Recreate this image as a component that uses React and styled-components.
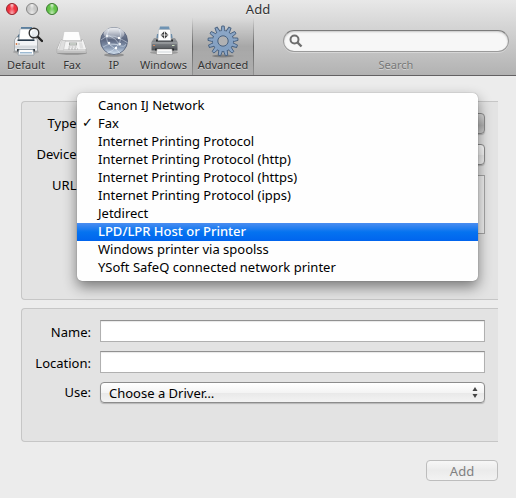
import { useState } from "react";
import styled, { createGlobalStyle, css } from "styled-components";

const protocols = [
  "Canon IJ Network",
  "Fax",
  "Internet Printing Protocol",
  "Internet Printing Protocol (http)",
  "Internet Printing Protocol (https)",
  "Internet Printing Protocol (ipps)",
  "Jetdirect",
  "LPD/LPR Host or Printer",
  "Windows printer via spoolss",
  "YSoft SafeQ connected network printer",
];

const DefaultIcon = () => (
  <svg width="34" height="34" viewBox="0 0 34 34" aria-hidden="true">
    <ellipse cx="17" cy="28" rx="13" ry="2" fill="#000" opacity="0.15" />
    <path d="M12 3h11v4H12z" fill="#5b7f9f" />
    <path d="M8 13l2-3h14l2 3v4H8z" fill="#4a6983" />
    <path d="M11 5h12l1 11H10z" fill="#fff" stroke="#9aa7b3" strokeWidth="0.6" />
    <path d="M5.500 16l2-3h2v3h15v-3h2l2 3v11h-23z" fill="#f1f3f5" stroke="#8d9297" strokeWidth="0.7" />
    <path d="M8.500 15.500h17v1.500h-17z" fill="#27394a" />
    <path d="M6 21.500h22v3H6z" fill="#d5d9dd" />
    <path d="M8 25h18v2.500H8z" fill="#3a4046" />
    <path d="M10 25.500h14l1 5.500H9z" fill="#fdfdfd" stroke="#7b8a97" strokeWidth="0.6" />
    <path d="M11 28h12v1.500H11z" fill="#9dbad2" />
    <circle cx="7.500" cy="20" r="0.9" fill="#d4773f" />
    <circle cx="10" cy="20" r="0.7" fill="#777" />
    <path d="M29 13l4 4" stroke="#222" strokeWidth="2.400" strokeLinecap="round" />
    <circle cx="25" cy="9" r="4.800" fill="#eef3f7" fillOpacity="0.85" stroke="#333" strokeWidth="1.400" />
    <path d="M22 9a3 3 0 0 1 3-3" stroke="#fff" strokeWidth="1.200" fill="none" />
  </svg>
);

const FaxIcon = () => (
  <svg width="34" height="34" viewBox="0 0 34 34" aria-hidden="true">
    <ellipse cx="17" cy="29" rx="15" ry="1.800" fill="#000" opacity="0.25" />
    <path d="M6 16h22l3 9v4H2v-4z" fill="#d4d4d4" stroke="#a2a2a2" strokeWidth="0.6" />
    <path d="M6 16h22l3 9H2.500z" fill="#f3f3f3" />
    <path d="M8 15h19v2.500H8z" fill="#b5b5b5" />
    <path d="M9 7.500h15l2 9H7.500z" fill="#fdfdfd" stroke="#c4c4c4" strokeWidth="0.6" />
    <path d="M6.500 16.500h4l-2 10h-5z" fill="#dedede" stroke="#bbb" strokeWidth="0.5" />
    <path d="M14 18.500h8v3h-8z" fill="#a4a7a4" />
    <path d="M15 19.300h6v1.300h-6z" fill="#d5dcd5" />
    <path d="M13.500 23h9M13 25h10" stroke="#b0b0b0" strokeDasharray="2 1" />
    <path d="M24 18.500h3l1.500 6H25z" fill="#e0e0e0" />
    <path d="M2 28h29" stroke="#bdbdbd" strokeWidth="1.500" />
  </svg>
);

const GlobeIcon = () => (
  <svg width="34" height="34" viewBox="0 0 34 34" aria-hidden="true">
    <defs>
      <linearGradient id="globe" x1="0" y1="0" x2="0" y2="1">
        <stop offset="0" stopColor="#8e98ab" />
        <stop offset="0.45" stopColor="#5c6780" />
        <stop offset="0.75" stopColor="#8a9bb4" />
        <stop offset="1" stopColor="#d6e4f2" />
      </linearGradient>
      <linearGradient id="shine" x1="0" y1="0" x2="0" y2="1">
        <stop offset="0" stopColor="#fff" stopOpacity="0.85" />
        <stop offset="1" stopColor="#fff" stopOpacity="0.1" />
      </linearGradient>
    </defs>
    <ellipse cx="17" cy="31" rx="10" ry="1.800" fill="#000" opacity="0.25" />
    <circle cx="17" cy="17" r="13.500" fill="url(#globe)" stroke="#515c74" strokeWidth="0.8" />
    <ellipse cx="17" cy="9.500" rx="10.500" ry="6" fill="url(#shine)" />
    <g fill="none" stroke="#e8f1fb" strokeWidth="0.6" opacity="0.8">
      <path d="M4 16q8-7 18-2t8 5" />
      <path d="M12 5q-5 12 1 16t10 8" />
      <path d="M22 5q4 9-1 16t-11 8" />
      <path d="M6 23q8-5 15-2t8-1" />
      <path d="M9 10l9 5 5 6M13 21l10-1" />
    </g>
    <g fill="#fff">
      <circle cx="10" cy="12" r="1" />
      <circle cx="22" cy="14" r="1.200" />
      <circle cx="12" cy="19" r="1.300" />
      <circle cx="23" cy="20" r="1.100" />
      <circle cx="19" cy="24" r="1.200" />
    </g>
  </svg>
);

const WindowsIcon = () => (
  <svg width="34" height="34" viewBox="0 0 34 34" aria-hidden="true">
    <defs>
      <linearGradient id="body" x1="0" y1="0" x2="0" y2="1">
        <stop offset="0" stopColor="#9b9ea1" />
        <stop offset="0.5" stopColor="#75797d" />
        <stop offset="1" stopColor="#4c5054" />
      </linearGradient>
    </defs>
    <ellipse cx="17" cy="28.500" rx="14" ry="1.800" fill="#000" opacity="0.2" />
    <path d="M13 2.500h9l1 4H12z" fill="#6f93b3" />
    <path d="M10 10h15l1 7H9z" fill="#6488a8" />
    <path d="M7 14h21l2.500 4v8.500h-26V18z" fill="url(#body)" />
    <path d="M9 15.500h17v2H9z" fill="#26292c" />
    <path d="M11.500 5.500h12l.5 11H11z" fill="#fff" stroke="#a4acb3" strokeWidth="0.5" />
    <path d="M17.500 7l4 4-4 4-4-4z" fill="#3c3c3c" />
    <path d="M17.500 7v8M13.500 11h8" stroke="#fff" strokeWidth="0.8" />
    <path d="M5 19h25" stroke="#b4b7ba" strokeWidth="0.8" />
    <path d="M25 21.500h2.500" stroke="#cfe0c0" strokeWidth="1" />
    <path d="M6 21.500h2" stroke="#d08a63" strokeWidth="1" />
    <path d="M8 24.500h19v2H8z" fill="#25282b" />
    <path d="M10 25h15l.5 5.500h-16z" fill="#fbfbfb" stroke="#888" strokeWidth="0.5" />
    <path d="M11 28h13" stroke="#cfd5d9" strokeWidth="1" />
  </svg>
);

const teeth = Array.from({ length: 13 }, (_, i) => (i * 360) / 13);

const GearIcon = () => (
  <svg width="34" height="34" viewBox="0 0 34 34" aria-hidden="true">
    <defs>
      <linearGradient id="gear" gradientUnits="userSpaceOnUse" x1="0" y1="1" x2="0" y2="32">
        <stop offset="0" stopColor="#8ea9c9" />
        <stop offset="1" stopColor="#7f9cbe" />
      </linearGradient>
    </defs>
    <ellipse cx="17" cy="32" rx="11" ry="1.500" fill="#000" opacity="0.25" />
    <g fill="#8aa5c6" stroke="#48617f" strokeWidth="0.9">
      {teeth.map((angle) => (
        <path key={angle} d="M15 8l.8-6h2.400l.8 6z" transform={`rotate(${angle} 17 17)`} />
      ))}
      <circle cx="17" cy="17" r="10.500" />
    </g>
    {teeth.map((angle) => (
      <path key={angle} d="M15.600 8l.6-3h1.600l.6 3z" fill="#8aa5c6" transform={`rotate(${angle} 17 17)`} />
    ))}
    <circle cx="17" cy="17" r="10" fill="url(#gear)" />
    <circle cx="17" cy="17" r="5.200" fill="#b0b1b3" stroke="#48617f" strokeWidth="1" />
  </svg>
);

const tabs = [
  { name: "Default", icon: <DefaultIcon />, width: 50 },
  { name: "Fax", icon: <FaxIcon />, width: 42 },
  { name: "IP", icon: <GlobeIcon />, width: 42 },
  { name: "Windows", icon: <WindowsIcon />, width: 57 },
  { name: "Advanced", icon: <GearIcon />, width: 62 },
];

const App = () => {
  const [tab, setTab] = useState("Advanced");
  const [type, setType] = useState("Fax");
  const [active, setActive] = useState("LPD/LPR Host or Printer");

  return (
    <>
      <GlobalStyle />
      <Header>
        <TitleBar>
          <Lights>
            <Light $color="#f0323f" $edge="#93262e" aria-label="Close" />
            <Light $color="#c8c8c8" $edge="#858585" aria-label="Minimize" />
            <Light $color="#62c348" $edge="#3c7a31" aria-label="Zoom" />
          </Lights>
          <Title>Add</Title>
        </TitleBar>
        <Toolbar>
          {tabs.map(({ name, icon, width }) => (
            <Tab key={name} $width={width} $active={tab === name} onClick={() => setTab(name)}>
              {icon}
              {name}
            </Tab>
          ))}
          <Search>
            <SearchBox>
              <svg width="14" height="14" viewBox="0 0 14 14" aria-hidden="true">
                <circle cx="5.500" cy="5.500" r="4" fill="none" stroke="#6e6e6e" strokeWidth="2" />
                <path d="M8.500 8.500l4 4" stroke="#6e6e6e" strokeWidth="2.400" />
              </svg>
              <SearchInput id="search" type="search" />
            </SearchBox>
            <SearchLabel htmlFor="search">Search</SearchLabel>
          </Search>
        </Toolbar>
      </Header>

      <Main>
        <Panel>
          <Row $labelWidth={57}>
            <Label htmlFor="type">Type:</Label>
            <Field>
              <Select id="type" $pressed value={type} onChange={(e) => setType(e.target.value)}>
                {protocols.map((name) => (
                  <option key={name}>{name}</option>
                ))}
              </Select>
              <Menu>
                {protocols.map((name) => (
                  <li key={name}>
                    <MenuItem
                      $active={active === name}
                      onMouseEnter={() => setActive(name)}
                      onClick={() => setType(name)}
                    >
                      <Check>{type === name && "✓"}</Check>
                      {name}
                    </MenuItem>
                  </li>
                ))}
              </Menu>
            </Field>
          </Row>
          <Row $labelWidth={57}>
            <Label htmlFor="device">Device:</Label>
            <Select id="device" />
          </Row>
          <Row $labelWidth={57}>
            <Label htmlFor="url">URL:</Label>
            <TextArea id="url" />
          </Row>
        </Panel>

        <Panel $compact>
          <Row $labelWidth={68}>
            <Label $tall htmlFor="name">Name:</Label>
            <Input id="name" type="text" />
          </Row>
          <Row $labelWidth={68}>
            <Label $tall htmlFor="location">Location:</Label>
            <Input id="location" type="text" />
          </Row>
          <Row $labelWidth={68}>
            <Label htmlFor="driver">Use:</Label>
            <Field>
              <Select id="driver">
                <option>Choose a Driver…</option>
              </Select>
              <Arrows width="6" height="11" viewBox="0 0 6 11" aria-hidden="true">
                <path d="M3 0l2.500 4h-5zM3 11l2.500-4h-5z" fill="#444" />
              </Arrows>
            </Field>
          </Row>
        </Panel>

        <Footer>
          <AddButton disabled>Add</AddButton>
        </Footer>
      </Main>
    </>
  );
};

const GlobalStyle = createGlobalStyle`
  * {
    box-sizing: border-box;
  }
  body {
    margin: 0;
    background: #ececec;
    color: #000;
    font-family: "Noto Sans", "Open Sans", sans-serif;
    font-size: 13px;
    line-height: 18px;
  }
  button, input, select, textarea {
    margin: 0;
    font: inherit;
    color: inherit;
    outline: none;
  }
`;

const Header = styled.header`
  background: linear-gradient(#e8e8e8, #b2b2b2);
  border-bottom: 1px solid #636163;
`;

const TitleBar = styled.div`
  display: grid;
  grid-template-columns: 1fr auto 1fr;
  align-items: center;
  height: 18px;
  padding: 0 6px;
`;

const Lights = styled.div`
  display: flex;
  gap: 8px;
`;

const Light = styled.button`
  width: 12px;
  height: 12px;
  padding: 0;
  border: 1px solid ${({ $edge }) => $edge};
  border-radius: 50%;
  background: radial-gradient(ellipse at 50% 10%, #ffffffcc, transparent 35%),
    radial-gradient(ellipse at 50% 100%, #ffffffaa, transparent 50%),
    ${({ $color }) => $color};
`;

const Title = styled.h1`
  margin: 0;
  font-size: 13px;
  font-weight: 400;
  line-height: 18px;
  color: #333;
  text-shadow: 0 1px 0 #ffffff88;
`;

const Toolbar = styled.div`
  display: flex;
  align-items: stretch;
  height: 57px;
  padding: 0 7px 0 1px;
`;

const Tab = styled.button`
  display: flex;
  flex-direction: column;
  align-items: center;
  width: ${({ $width }) => $width}px;
  padding: 6px 0 0;
  border: none;
  background: none;
  font-size: 11px;
  line-height: 14px;
  color: #333;
  text-shadow: 0 1px 0 #ffffff66;

  svg {
    flex: none;
  }

  ${({ $active }) =>
    $active &&
    css`
      background: linear-gradient(#00000000, #00000028 50%, #00000008);
      border: solid #00000044;
      border-width: 0 1px;
      border-image: linear-gradient(#00000000, #00000066 50%, #00000022) 1;
    `}
`;

const Search = styled.div`
  flex: 1;
  display: flex;
  flex-direction: column;
  align-items: center;
  margin-left: 29px;
  padding-top: 12px;
`;

const SearchBox = styled.div`
  display: flex;
  align-items: center;
  align-self: stretch;
  height: 22px;
  padding: 0 5px;
  border: 1px solid #9a9a9a;
  border-top-color: #7c7c7c;
  border-radius: 11px;
  background: #f7f7f7;
  box-shadow: inset 0 1px 2px #00000033, 0 1px 0 #ffffff55;
`;

const SearchInput = styled.input`
  flex: 1;
  min-width: 0;
  padding: 0 5px;
  border: none;
  background: none;
`;

const SearchLabel = styled.label`
  margin-top: 6px;
  font-size: 11px;
  line-height: 14px;
  color: #777;
  text-shadow: 0 1px 0 #ffffff66;
`;

const Main = styled.main`
  padding: 25px 18px 16px 21px;
`;

const Panel = styled.section`
  display: flex;
  flex-direction: column;
  gap: ${({ $compact }) => ($compact ? 9 : 10)}px;
  padding: ${({ $compact }) => ($compact ? "11px 13px 38px 1px" : "11px 13px 65px 1px")};
  margin-bottom: ${({ $compact }) => ($compact ? 18 : 8)}px;
  border: 1px solid #c6c6c6;
  border-right: none;
  border-radius: 4px 0 0 4px;
  background: #e3e3e3;
`;

const Row = styled.div`
  display: grid;
  grid-template-columns: ${({ $labelWidth }) => $labelWidth}px 1fr;
  column-gap: 9px;
`;

const Label = styled.label`
  text-align: right;
  padding-top: ${({ $tall }) => ($tall ? 3 : 1)}px;
`;

const Field = styled.div`
  position: relative;
`;

const Input = styled.input`
  display: block;
  width: 100%;
  height: 22px;
  padding: 0 4px;
  border: 1px solid #b0b0b0;
  border-top-color: #919191;
  background: #fff;
  box-shadow: inset 0 1px 1px #00000018;
`;

const TextArea = styled.textarea`
  display: block;
  width: 100%;
  height: 59px;
  padding: 2px 4px;
  border: 1px solid #a5a5a5;
  background: #f0f0f0;
  resize: none;
`;

const Select = styled.select`
  display: block;
  width: 100%;
  height: 21px;
  padding: 0 8px;
  border: 1px solid #8c8c8c;
  border-radius: 4px;
  background: ${({ $pressed }) =>
    $pressed
      ? "linear-gradient(#dcdcdc, #b4b4b4 60%, #cfcfcf)"
      : "linear-gradient(#fff, #f4f4f4 50%, #e9e9e9 55%, #f3f3f3)"};
  box-shadow: 0 1px 1px #00000033;
  line-height: 18px;
  appearance: none;
`;

const Arrows = styled.svg`
  position: absolute;
  top: 5px;
  right: 7px;
  pointer-events: none;
`;

const Menu = styled.ul`
  position: absolute;
  z-index: 1;
  top: -20px;
  left: -12px;
  right: 7px;
  margin: 0;
  padding: 4px 0;
  border-radius: 5px;
  background: #fefefe;
  box-shadow: 0 0 1px #00000077, 0 6px 14px #00000077;
  list-style: none;
`;

const MenuItem = styled.button`
  display: flex;
  align-items: flex-start;
  width: 100%;
  height: 18px;
  padding: 0;
  border: none;
  line-height: 16px;
  text-align: left;
  color: ${({ $active }) => ($active ? "#fff" : "#000")};
  font-weight: ${({ $active }) => ($active ? 500 : 400)};
  background: ${({ $active }) =>
    $active ? "linear-gradient(#4b8df0, #0573f0 50%, #0064ee)" : "none"};
`;

const Check = styled.span`
  width: 21px;
  padding-left: 5px;
  font-family: "DejaVu Sans", sans-serif;
  font-weight: 700;
`;

const Footer = styled.footer`
  display: flex;
  justify-content: flex-end;
`;

const AddButton = styled.button`
  width: 72px;
  height: 21px;
  padding: 0;
  border: 1px solid #bdbdbd;
  border-radius: 4px;
  background: linear-gradient(#f7f7f7, #ebebeb 50%, #f2f2f2);
  line-height: 18px;
  color: #808080;
`;

export default App;
